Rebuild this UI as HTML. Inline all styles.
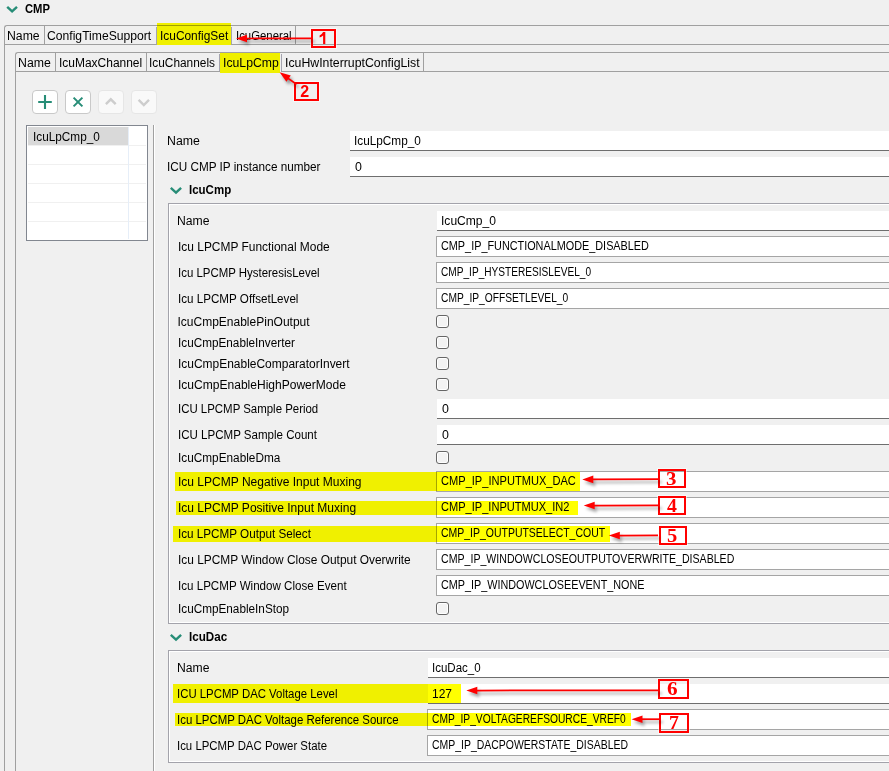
<!DOCTYPE html>
<html><head><meta charset="utf-8"><style>
html,body{margin:0;padding:0;}
body{width:889px;height:771px;overflow:hidden;background:#f0f0f0;position:relative;font-family:"Liberation Sans",sans-serif;}
body>div,body>svg{position:absolute;box-sizing:content-box;}
.t{font-size:12px;line-height:14px;white-space:pre;color:#000;transform-origin:0 0;}
.hl{background:#ffff00;mix-blend-mode:multiply;}
</style></head><body>
<svg style="left:0;top:0" width="30" height="20"><polyline points="7.2,6.8 12.1,11.4 17.0,6.8" fill="none" stroke="#278d77" stroke-width="2.4"/></svg>
<div style="left:4px;top:25px;width:889px;height:800px;border-left:1px solid #a0a0a0;border-top:1px solid #a0a0a0;border-top-left-radius:3px"></div>
<div style="left:5px;top:44px;width:152px;height:1px;background:#a0a0a0"></div>
<div style="left:231px;top:44px;width:889px;height:1px;background:#a0a0a0"></div>
<div style="left:44px;top:26px;width:1px;height:18px;background:#a0a0a0"></div>
<div style="left:295px;top:26px;width:1px;height:18px;background:#a0a0a0"></div>
<div style="left:156px;top:27px;width:1px;height:17px;background:#a4a4b0"></div>
<div style="left:231px;top:27px;width:1px;height:17px;background:#a4a4b0"></div>
<div style="left:15px;top:52px;width:889px;height:800px;border-left:1px solid #a0a0a0;border-top:1px solid #a0a0a0;border-top-left-radius:3px"></div>
<div style="left:16px;top:71px;width:204px;height:1px;background:#a0a0a0"></div>
<div style="left:281px;top:71px;width:889px;height:1px;background:#a0a0a0"></div>
<div style="left:55px;top:53px;width:1px;height:18px;background:#a0a0a0"></div>
<div style="left:146px;top:53px;width:1px;height:18px;background:#a0a0a0"></div>
<div style="left:423px;top:53px;width:1px;height:18px;background:#a0a0a0"></div>
<div style="left:219px;top:54px;width:1px;height:17px;background:#a4a4b0"></div>
<div style="left:281px;top:54px;width:1px;height:17px;background:#a4a4b0"></div>
<div style="left:32px;top:90px;width:24px;height:22px;background:#fff;border:1px solid #c9c9c9;border-radius:4px"></div>
<div style="left:65px;top:90px;width:24px;height:22px;background:#fff;border:1px solid #c9c9c9;border-radius:4px"></div>
<div style="left:98px;top:90px;width:24px;height:22px;background:#f9f9f9;border:1px solid #e6e6e6;border-radius:4px"></div>
<div style="left:131px;top:90px;width:24px;height:22px;background:#f9f9f9;border:1px solid #e6e6e6;border-radius:4px"></div>
<svg style="left:0;top:80px" width="170" height="40"><path d="M38.2 22 H51.8 M45 15 V29" stroke="#278d77" stroke-width="2.1" fill="none"/><path d="M73.6 17.6 L82.4 26.4 M82.4 17.6 L73.6 26.4" stroke="#278d77" stroke-width="2.0" fill="none"/><path d="M105.9 24.2 L110.8 19.3 L115.7 24.2" stroke="#cdcdcd" stroke-width="2.4" fill="none"/><path d="M138.6 19.8 L143.8 25 L149 19.8" stroke="#cdcdcd" stroke-width="2.4" fill="none"/></svg>
<div style="left:26px;top:125px;width:120px;height:114px;background:#fff;border:1px solid #828790"></div>
<div style="left:28px;top:127px;width:101px;height:18px;background:#d9d9d9"></div>
<div style="left:28px;top:145px;width:118px;height:1px;background:#f0f0f0"></div>
<div style="left:28px;top:164px;width:118px;height:1px;background:#f0f0f0"></div>
<div style="left:28px;top:183px;width:118px;height:1px;background:#f0f0f0"></div>
<div style="left:28px;top:202px;width:118px;height:1px;background:#f0f0f0"></div>
<div style="left:28px;top:221px;width:118px;height:1px;background:#f0f0f0"></div>
<div style="left:128px;top:127px;width:1px;height:112px;background:#e6eef8"></div>
<div style="left:153px;top:125px;width:1px;height:700px;background:#a0a0a0"></div>
<div style="left:154px;top:125px;width:1px;height:700px;background:#ffffff"></div>
<div style="left:350px;top:131px;width:539px;height:19px;background:#fff;border-bottom:1px solid #6e6e6e"></div>
<div style="left:350px;top:157px;width:539px;height:19px;background:#fff;border-bottom:1px solid #6e6e6e"></div>
<svg style="left:160px;top:180px" width="30" height="20"><polyline points="170.8,187.8 176,192.6 181.1,187.8" transform="translate(-160,-180)" fill="none" stroke="#278d77" stroke-width="2.4"/></svg>
<div style="left:168px;top:203px;width:889px;height:419px;border:1px solid #a3a3ab;border-right:none;box-shadow:inset 1px 1px 0 #fff, inset 0 -1px 0 #fff"></div>
<div style="left:437px;top:211px;width:452px;height:19px;background:#fff;border-bottom:1px solid #6e6e6e"></div>
<div style="left:436px;top:236px;width:458px;height:19px;background:#fff;border:1px solid #a5a5a5"></div>
<div style="left:436px;top:262px;width:458px;height:19px;background:#fff;border:1px solid #a5a5a5"></div>
<div style="left:436px;top:288px;width:458px;height:19px;background:#fff;border:1px solid #a5a5a5"></div>
<div style="left:436px;top:315px;width:11px;height:11px;background:#f3f3f3;border:1px solid #666;border-radius:3px;box-shadow:inset 0 0 0 1px #fff"></div>
<div style="left:436px;top:336px;width:11px;height:11px;background:#f3f3f3;border:1px solid #666;border-radius:3px;box-shadow:inset 0 0 0 1px #fff"></div>
<div style="left:436px;top:357px;width:11px;height:11px;background:#f3f3f3;border:1px solid #666;border-radius:3px;box-shadow:inset 0 0 0 1px #fff"></div>
<div style="left:436px;top:378px;width:11px;height:11px;background:#f3f3f3;border:1px solid #666;border-radius:3px;box-shadow:inset 0 0 0 1px #fff"></div>
<div style="left:437px;top:399px;width:452px;height:19px;background:#fff;border-bottom:1px solid #6e6e6e"></div>
<div style="left:437px;top:425px;width:452px;height:19px;background:#fff;border-bottom:1px solid #6e6e6e"></div>
<div style="left:436px;top:451px;width:11px;height:11px;background:#f3f3f3;border:1px solid #666;border-radius:3px;box-shadow:inset 0 0 0 1px #fff"></div>
<div style="left:436px;top:471px;width:458px;height:19px;background:#fff;border:1px solid #a5a5a5"></div>
<div style="left:436px;top:497px;width:458px;height:19px;background:#fff;border:1px solid #a5a5a5"></div>
<div style="left:436px;top:523px;width:458px;height:19px;background:#fff;border:1px solid #a5a5a5"></div>
<div style="left:436px;top:549px;width:458px;height:19px;background:#fff;border:1px solid #a5a5a5"></div>
<div style="left:436px;top:575px;width:458px;height:19px;background:#fff;border:1px solid #a5a5a5"></div>
<div style="left:436px;top:602px;width:11px;height:11px;background:#f3f3f3;border:1px solid #666;border-radius:3px;box-shadow:inset 0 0 0 1px #fff"></div>
<svg style="left:160px;top:625px" width="30" height="20"><polyline points="170.8,634.8 176,639.6 181.1,634.8" transform="translate(-160,-625)" fill="none" stroke="#278d77" stroke-width="2.4"/></svg>
<div style="left:168px;top:650px;width:889px;height:111px;border:1px solid #a3a3ab;border-right:none;box-shadow:inset 1px 1px 0 #fff, inset 0 -1px 0 #fff"></div>
<div style="left:428px;top:658px;width:461px;height:19px;background:#fff;border-bottom:1px solid #6e6e6e"></div>
<div style="left:428px;top:684px;width:461px;height:19px;background:#fff;border-bottom:1px solid #6e6e6e"></div>
<div style="left:427px;top:709px;width:467px;height:19px;background:#fff;border:1px solid #a5a5a5"></div>
<div style="left:427px;top:735px;width:467px;height:19px;background:#fff;border:1px solid #a5a5a5"></div>
<div class="t" style="left:25.30px;top:2.00px;font-weight:bold;transform:scaleX(0.9370)">CMP</div>
<div class="t" style="left:7.38px;top:29.00px;transform:scaleX(1.0194)">Name</div>
<div class="t" style="left:47.39px;top:29.00px;transform:scaleX(1.0127)">ConfigTimeSupport</div>
<div class="t" style="left:159.51px;top:29.00px;transform:scaleX(0.9926)">IcuConfigSet</div>
<div class="t" style="left:235.95px;top:29.00px;transform:scaleX(0.9474)">IcuGeneral</div>
<div class="t" style="left:18.17px;top:56.00px;transform:scaleX(1.0258)">Name</div>
<div class="t" style="left:58.90px;top:56.00px;transform:scaleX(0.9976)">IcuMaxChannel</div>
<div class="t" style="left:149.41px;top:56.00px;transform:scaleX(0.9892)">IcuChannels</div>
<div class="t" style="left:222.78px;top:56.00px;transform:scaleX(1.0208)">IcuLpCmp</div>
<div class="t" style="left:285.28px;top:56.00px;transform:scaleX(1.0246)">IcuHwInterruptConfigList</div>
<div class="t" style="left:33.32px;top:130.00px;transform:scaleX(0.9821)">IcuLpCmp_0</div>
<div class="t" style="left:167.47px;top:134.00px;transform:scaleX(1.0258)">Name</div>
<div class="t" style="left:354.32px;top:134.00px;transform:scaleX(0.9821)">IcuLpCmp_0</div>
<div class="t" style="left:167.32px;top:160.00px;transform:scaleX(0.9782)">ICU CMP IP instance number</div>
<div class="t" style="left:355.00px;top:160.00px;transform:scaleX(1.0333)">0</div>
<div class="t" style="left:189.04px;top:183.00px;font-weight:bold;transform:scaleX(0.9581)">IcuCmp</div>
<div class="t" style="left:177.48px;top:214.00px;transform:scaleX(1.0161)">Name</div>
<div class="t" style="left:177.51px;top:240.00px;transform:scaleX(0.9947)">Icu LPCMP Functional Mode</div>
<div class="t" style="left:177.55px;top:266.00px;transform:scaleX(0.9531)">Icu LPCMP HysteresisLevel</div>
<div class="t" style="left:177.53px;top:292.00px;transform:scaleX(0.9691)">Icu LPCMP OffsetLevel</div>
<div class="t" style="left:177.50px;top:315.00px;transform:scaleX(1.0000)">IcuCmpEnablePinOutput</div>
<div class="t" style="left:177.52px;top:336.00px;transform:scaleX(0.9790)">IcuCmpEnableInverter</div>
<div class="t" style="left:177.50px;top:357.00px;transform:scaleX(0.9971)">IcuCmpEnableComparatorInvert</div>
<div class="t" style="left:177.50px;top:378.00px;transform:scaleX(1.0030)">IcuCmpEnableHighPowerMode</div>
<div class="t" style="left:177.55px;top:402.00px;transform:scaleX(0.9527)">ICU LPCMP Sample Period</div>
<div class="t" style="left:177.54px;top:428.00px;transform:scaleX(0.9618)">ICU LPCMP Sample Count</div>
<div class="t" style="left:177.52px;top:451.00px;transform:scaleX(0.9835)">IcuCmpEnableDma</div>
<div class="t" style="left:177.50px;top:475.00px;transform:scaleX(1.0016)">Icu LPCMP Negative Input Muxing</div>
<div class="t" style="left:177.50px;top:501.00px;transform:scaleX(1.0011)">Icu LPCMP Positive Input Muxing</div>
<div class="t" style="left:177.53px;top:527.00px;transform:scaleX(0.9735)">Icu LPCMP Output Select</div>
<div class="t" style="left:177.51px;top:553.00px;transform:scaleX(0.9923)">Icu LPCMP Window Close Output Overwrite</div>
<div class="t" style="left:177.53px;top:579.00px;transform:scaleX(0.9661)">Icu LPCMP Window Close Event</div>
<div class="t" style="left:177.52px;top:602.00px;transform:scaleX(0.9795)">IcuCmpEnableInStop</div>
<div class="t" style="left:440.99px;top:214.00px;transform:scaleX(1.0057)">IcuCmp_0</div>
<div class="t" style="left:441.10px;top:239.00px;transform:scaleX(0.9039)">CMP_IP_FUNCTIONALMODE_DISABLED</div>
<div class="t" style="left:441.16px;top:265.00px;transform:scaleX(0.8429)">CMP_IP_HYSTERESISLEVEL_0</div>
<div class="t" style="left:441.15px;top:291.00px;transform:scaleX(0.8514)">CMP_IP_OFFSETLEVEL_0</div>
<div class="t" style="left:442.00px;top:402.00px;transform:scaleX(1.0333)">0</div>
<div class="t" style="left:442.00px;top:428.00px;transform:scaleX(1.0333)">0</div>
<div class="t" style="left:441.08px;top:474.00px;transform:scaleX(0.9236)">CMP_IP_INPUTMUX_DAC</div>
<div class="t" style="left:441.08px;top:500.00px;transform:scaleX(0.9217)">CMP_IP_INPUTMUX_IN2</div>
<div class="t" style="left:441.13px;top:526.00px;transform:scaleX(0.8727)">CMP_IP_OUTPUTSELECT_COUT</div>
<div class="t" style="left:441.12px;top:552.00px;transform:scaleX(0.8828)">CMP_IP_WINDOWCLOSEOUTPUTOVERWRITE_DISABLED</div>
<div class="t" style="left:441.10px;top:578.00px;transform:scaleX(0.9000)">CMP_IP_WINDOWCLOSEEVENT_NONE</div>
<div class="t" style="left:188.83px;top:630.00px;font-weight:bold;transform:scaleX(0.9684)">IcuDac</div>
<div class="t" style="left:177.29px;top:661.00px;transform:scaleX(1.0129)">Name</div>
<div class="t" style="left:177.35px;top:687.00px;transform:scaleX(0.9482)">ICU LPCMP DAC Voltage Level</div>
<div class="t" style="left:177.35px;top:713.00px;transform:scaleX(0.9528)">Icu LPCMP DAC Voltage Reference Source</div>
<div class="t" style="left:177.35px;top:739.00px;transform:scaleX(0.9503)">Icu LPCMP DAC Power State</div>
<div class="t" style="left:432.04px;top:661.00px;transform:scaleX(0.9592)">IcuDac_0</div>
<div class="t" style="left:432.00px;top:687.00px;transform:scaleX(1.0000)">127</div>
<div class="t" style="left:432.15px;top:712.00px;transform:scaleX(0.8535)">CMP_IP_VOLTAGEREFSOURCE_VREF0</div>
<div class="t" style="left:432.13px;top:738.00px;transform:scaleX(0.8714)">CMP_IP_DACPOWERSTATE_DISABLED</div>
<div class="hl" style="left:157px;top:23px;width:74px;height:22px"></div>
<div class="hl" style="left:220px;top:52.6px;width:60px;height:20.4px"></div>
<div class="hl" style="left:175px;top:472px;width:405px;height:19px"></div>
<div class="hl" style="left:176px;top:501px;width:402px;height:14px"></div>
<div class="hl" style="left:173px;top:526.2px;width:437px;height:15.799999999999955px"></div>
<div class="hl" style="left:172.8px;top:684.2px;width:288.2px;height:18.59999999999991px"></div>
<div class="hl" style="left:174.9px;top:713px;width:456.1px;height:13px"></div>
<div style="left:311px;top:29px;width:21px;height:15px;border:2px solid #ff0000;box-shadow:0 0 0 1px rgba(255,255,255,.5)"></div>
<svg style="left:0;top:0" width="400" height="60"><path d="M323.1 32 H325.3 V44 H323.1 V35.6 Q321.5 37 319.6 37.6 V35.4 Q322 34.4 323.1 32 Z" fill="#ff0000"/></svg>
<div style="left:294px;top:82px;width:21px;height:15px;border:2px solid #ff0000;box-shadow:0 0 0 1px rgba(255,255,255,.5)"></div>
<div style="left:300.2px;top:84.3px;font:bold 16px/1 'Liberation Sans',sans-serif;color:#ff0000;transform:scaleX(1.0);transform-origin:0 0">2</div>
<div style="left:658px;top:469px;width:24px;height:15px;border:2px solid #ff0000;box-shadow:0 0 0 1px rgba(255,255,255,.5)"></div>
<div style="left:666.3px;top:470px;font:bold 18px/1 'Liberation Serif',serif;color:#ff0000;transform:scaleX(1.16);transform-origin:0 0">3</div>
<div style="left:658px;top:496px;width:24px;height:15px;border:2px solid #ff0000;box-shadow:0 0 0 1px rgba(255,255,255,.5)"></div>
<div style="left:666.5px;top:497px;font:bold 18px/1 'Liberation Serif',serif;color:#ff0000;transform:scaleX(1.1);transform-origin:0 0">4</div>
<div style="left:659px;top:526px;width:24px;height:15px;border:2px solid #ff0000;box-shadow:0 0 0 1px rgba(255,255,255,.5)"></div>
<div style="left:667.3px;top:527px;font:bold 18px/1 'Liberation Serif',serif;color:#ff0000;transform:scaleX(1.14);transform-origin:0 0">5</div>
<div style="left:658px;top:679px;width:27px;height:16px;border:2px solid #ff0000;box-shadow:0 0 0 1px rgba(255,255,255,.5)"></div>
<div style="left:667.4px;top:680px;font:bold 18px/1 'Liberation Serif',serif;color:#ff0000;transform:scaleX(1.18);transform-origin:0 0">6</div>
<div style="left:659px;top:713px;width:26px;height:16px;border:2px solid #ff0000;box-shadow:0 0 0 1px rgba(255,255,255,.5)"></div>
<div style="left:668.6px;top:714px;font:bold 18px/1 'Liberation Serif',serif;color:#ff0000;transform:scaleX(1.1);transform-origin:0 0">7</div>
<svg class="ar" width="889" height="771" style="left:0;top:0"><g style="filter:drop-shadow(2.5px 3.5px 1.4px rgba(0,0,0,.36))"><line x1="246.0" y1="38.5" x2="313" y2="38.3" stroke="#ff0000" stroke-width="1.75"/><path d="M236.0 38.5 L247.0 42.3 L247.0 34.7 Z" fill="#ff0000"/></g></svg>
<svg class="ar" width="889" height="771" style="left:0;top:0"><g style="filter:drop-shadow(2.5px 3.5px 1.4px rgba(0,0,0,.36))"><line x1="287.8" y1="78.1" x2="296.5" y2="84.3" stroke="#ff0000" stroke-width="1.75"/><path d="M279.6 72.3 L286.4 81.8 L290.8 75.6 Z" fill="#ff0000"/></g></svg>
<svg class="ar" width="889" height="771" style="left:0;top:0"><g style="filter:drop-shadow(2.5px 3.5px 1.4px rgba(0,0,0,.36))"><line x1="592.3" y1="479.4" x2="660" y2="479" stroke="#ff0000" stroke-width="1.75"/><path d="M582.3 479.5 L593.3 483.2 L593.3 475.6 Z" fill="#ff0000"/></g></svg>
<svg class="ar" width="889" height="771" style="left:0;top:0"><g style="filter:drop-shadow(2.5px 3.5px 1.4px rgba(0,0,0,.36))"><line x1="593.7" y1="505.5" x2="660" y2="505.3" stroke="#ff0000" stroke-width="1.75"/><path d="M583.7 505.5 L594.7 509.3 L594.7 501.7 Z" fill="#ff0000"/></g></svg>
<svg class="ar" width="889" height="771" style="left:0;top:0"><g style="filter:drop-shadow(2.5px 3.5px 1.4px rgba(0,0,0,.36))"><line x1="618.8" y1="535.5" x2="658" y2="535.3" stroke="#ff0000" stroke-width="1.75"/><path d="M608.8 535.5 L619.8 539.3 L619.8 531.7 Z" fill="#ff0000"/></g></svg>
<svg class="ar" width="889" height="771" style="left:0;top:0"><g style="filter:drop-shadow(2.5px 3.5px 1.4px rgba(0,0,0,.36))"><line x1="476.3" y1="690.5" x2="660" y2="690.3" stroke="#ff0000" stroke-width="1.75"/><path d="M466.3 690.5 L477.3 694.3 L477.3 686.7 Z" fill="#ff0000"/></g></svg>
<svg class="ar" width="889" height="771" style="left:0;top:0"><g style="filter:drop-shadow(2.5px 3.5px 1.4px rgba(0,0,0,.36))"><line x1="641.5" y1="719.2" x2="661" y2="719.2" stroke="#ff0000" stroke-width="1.75"/><path d="M631.5 719.2 L642.5 723.0 L642.5 715.4 Z" fill="#ff0000"/></g></svg>
</body></html>
